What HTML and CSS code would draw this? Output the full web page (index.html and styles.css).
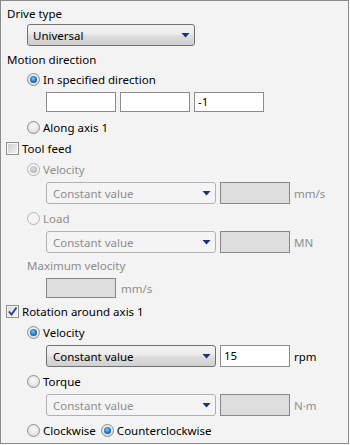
FILE: index.html
```html
<!DOCTYPE html>
<html lang="en">
<head>
    <meta charset="UTF-8">
    <title>Drive settings</title>
    <link rel="stylesheet" href="styles.css">
</head>
<body>

<div class="panel">
    <div class="line">Drive type</div>
    <div class="row row-top l1">
        <div class="combo wide"><span>Universal</span><i class="arrow"></i></div>
    </div>

    <div class="line">Motion direction</div>
    <div class="line l1"><span class="radio on"></span>In specified direction</div>
    <div class="edits l2">
        <div class="edit"></div>
        <div class="edit"></div>
        <div class="edit">-1</div>
    </div>
    <div class="line l1"><span class="radio"></span>Along axis 1</div>

    <div class="line check-line"><span class="check"></span>Tool feed</div>
    <div class="line l1 sub off"><span class="radio on"></span>Velocity</div>
    <div class="row l2">
        <div class="combo off"><span>Constant value</span><i class="arrow"></i></div>
        <div class="box"></div>
        <span class="unit off">mm/s</span>
    </div>
    <div class="line l1 off"><span class="radio"></span>Load</div>
    <div class="row row-short l2">
        <div class="combo off"><span>Constant value</span><i class="arrow"></i></div>
        <div class="box"></div>
        <span class="unit off">MN</span>
    </div>
    <div class="line l1 off">Maximum velocity</div>
    <div class="edits edits-single l2">
        <div class="box"></div>
        <span class="unit off">mm/s</span>
    </div>

    <div class="line check-line"><span class="check on">
        <svg width="11" height="11" viewBox="0 0 11 11"><path d="M2 5.5 L4.5 8.5 L9.5 1.5" fill="none" stroke="#243f86" stroke-width="1.8"/></svg>
    </span>Rotation around axis 1</div>
    <div class="line l1 sub"><span class="radio on"></span>Velocity</div>
    <div class="row l2">
        <div class="combo"><span>Constant value</span><i class="arrow"></i></div>
        <div class="edit tall">15</div>
        <span class="unit">rpm</span>
    </div>
    <div class="line l1"><span class="radio"></span>Torque</div>
    <div class="row l2">
        <div class="combo off"><span>Constant value</span><i class="arrow"></i></div>
        <div class="box"></div>
        <span class="unit off">N·m</span>
    </div>
    <div class="line l1">
        <span class="radio"></span>Clockwise
        <span class="radio on spaced"></span>Counterclockwise
    </div>
</div>

</body>
</html>
```

FILE: styles.css
```css
body {
    margin: 0;
    background: #fafafa;
}
.panel {
    width: 349px;
    height: 444px;
    box-sizing: border-box;
    border: 1px solid #8c8c8c;
    background: #f3f3f3;
    padding: 2px 6px 0;
    font-family: "Noto Sans", "Open Sans", sans-serif;
    font-size: 11.5px;
    color: #000;
}
.line {
    height: 20px;
    display: flex;
    align-items: center;
    gap: 3px;
    white-space: nowrap;
}
.off {
    color: #8d8d8d;
}
.check-line {
    margin-left: -1px;
    margin-top: 1px;
}
.sub {
    margin-top: 1px;
}
.row {
    display: flex;
    align-items: center;
    gap: 4px;
    height: 22px;
    margin-top: 3px;
    margin-bottom: 4px;
}
.row-top {
    margin-top: 1px;
    margin-bottom: 3px;
}
.row-short {
    margin-bottom: 2px;
}
.edits {
    display: flex;
    align-items: center;
    gap: 4px;
    height: 20px;
    margin-top: 3px;
    margin-bottom: 5px;
}
.edits-single {
    gap: 5px;
    margin-bottom: 3px;
}
.l1 {
    margin-left: 20px;
}
.l2 {
    margin-left: 39px;
}
.combo {
    width: 170px;
    height: 22px;
    box-sizing: border-box;
    border: 1px solid #707070;
    border-radius: 3px;
    background: linear-gradient(#f3f3f3, #ebebeb 45%, #dddddd 55%, #d0d0d0);
    display: flex;
    align-items: center;
    justify-content: space-between;
    padding: 0 4px 0 6px;
}
.combo.wide {
    width: 168px;
    padding-left: 5px;
}
.combo.off {
    background: #f4f4f4;
    border-color: #adb2b5;
}
.arrow {
    width: 9px;
    height: 5px;
    background: #1b3378;
    clip-path: polygon(0 0, 100% 0, 50% 100%);
}
.edit {
    width: 70px;
    height: 20px;
    box-sizing: border-box;
    border: 1px solid #8b8b8b;
    background: #fff;
    padding-left: 3px;
    line-height: 18px;
}
.edit.tall {
    height: 22px;
    line-height: 20px;
}
.box {
    width: 70px;
    height: 22px;
    box-sizing: border-box;
    border: 1px solid #878787;
    background: #dedede;
}
.edits .box {
    height: 20px;
}
.radio {
    position: relative;
    flex: none;
    width: 13px;
    height: 13px;
    box-sizing: border-box;
    border-radius: 50%;
    border: 1px solid #8e8f8f;
    background: radial-gradient(circle at 50% 40%, #fbfbfb, #e4e4e4 60%, #cdcdcd);
}
.radio.on::after {
    content: '';
    position: absolute;
    left: 2px;
    top: 2px;
    width: 7px;
    height: 7px;
    border-radius: 50%;
    background: radial-gradient(circle at 45% 40%, #86cbf7, #2a7fcc 45%, #0f3a72 95%);
}
.off .radio {
    border-color: #b3b3b3;
    background: #f4f4f4;
}
.off .radio.on::after {
    background: radial-gradient(circle at 45% 40%, #e0e0e0, #c2c2c2 50%, #a6a6a6 95%);
}
.radio.spaced {
    margin-left: 2px;
}
.check {
    flex: none;
    width: 13px;
    height: 13px;
    box-sizing: border-box;
    border: 1px solid #8e8f8f;
    background: linear-gradient(135deg, #cdcdcd, #f6f6f6);
    box-shadow: inset 0 0 0 1px #f8f8f8;
    display: flex;
    align-items: center;
    justify-content: center;
}
.check.on {
    background: linear-gradient(135deg, #d6d6d6, #f8f8f8);
}
```
